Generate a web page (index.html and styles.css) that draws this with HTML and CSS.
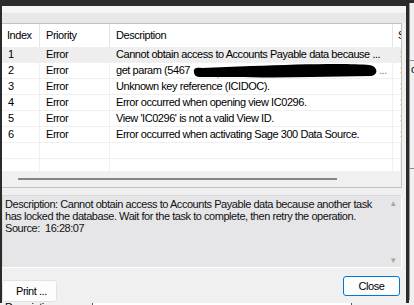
FILE: index.html
```html
<!DOCTYPE html>
<html lang="en">
<head>
  <meta charset="UTF-8">
  <title>Errors</title>
  <link rel="stylesheet" href="styles.css">
</head>
<body>
  <div class="desktop">
    <!-- Window behind the dialog -->
    <div class="bg-window">
      <div class="bg-upper">
        <div class="bg-side">
          <div class="bg-line"></div>
          <div class="bg-char">o</div>
          <div class="bg-gap"></div>
          <div class="bg-line"></div>
        </div>
      </div>
      <div class="bg-lower">
        <div class="bg-head">Description</div>
        <div class="bg-head wide"></div>
        <div class="bg-head"></div>
      </div>
    </div>

    <!-- Error dialog -->
    <div class="dialog">
      <div class="caption-strip"></div>
      <div class="tool-strip"></div>

      <div class="list">
        <div class="row head">
          <div class="cell">Index</div>
          <div class="cell">Priority</div>
          <div class="cell">Description</div>
          <div class="cell clip">Source</div>
        </div>
        <div class="rows">
          <div class="row selected">
            <div class="cell">1</div>
            <div class="cell">Error</div>
            <div class="cell">Cannot obtain access to Accounts Payable data because ...</div>
            <div class="cell clip">Sage</div>
          </div>
          <div class="row">
            <div class="cell">2</div>
            <div class="cell">Error</div>
            <div class="cell">get param (5467<span class="redacted"><svg width="188" height="15" viewBox="0 0 188 15"><path d="M3 9 C2 5 6 4 11 5 L60 3 C110 1 160 0 178 2 C187 3 188 12 180 13 L120 14 C80 15 40 14 10 14 C5 14 3 12 3 9 Z" fill="#000"/></svg></span><span class="dots">...</span></div>
            <div class="cell clip">Sage</div>
          </div>
          <div class="row">
            <div class="cell">3</div>
            <div class="cell">Error</div>
            <div class="cell">Unknown key reference (ICIDOC).</div>
            <div class="cell clip">Sage</div>
          </div>
          <div class="row">
            <div class="cell">4</div>
            <div class="cell">Error</div>
            <div class="cell">Error occurred when opening view IC0296.</div>
            <div class="cell clip">Sage</div>
          </div>
          <div class="row">
            <div class="cell">5</div>
            <div class="cell">Error</div>
            <div class="cell">View 'IC0296' is not a valid View ID.</div>
            <div class="cell clip">Sage</div>
          </div>
          <div class="row">
            <div class="cell">6</div>
            <div class="cell">Error</div>
            <div class="cell">Error occurred when activating Sage 300 Data Source.</div>
            <div class="cell clip">Sage</div>
          </div>
          <div class="row">
            <div class="cell"></div><div class="cell"></div><div class="cell"></div><div class="cell"></div>
          </div>
          <div class="row">
            <div class="cell"></div><div class="cell"></div><div class="cell"></div><div class="cell"></div>
          </div>
        </div>
        <div class="hscroll"><div class="hthumb"></div></div>
      </div>

      <!-- Details box -->
      <div class="details">
        <div class="details-text">Description: Cannot obtain access to Accounts Payable data because another task<br>has locked the database. Wait for the task to complete, then retry the operation.<br>Source:&nbsp; 16:28:07</div>
        <div class="vscroll"><span>&#9650;</span><span>&#9660;</span></div>
      </div>

      <div class="buttons">
        <button class="btn print">Print ...</button>
        <button class="btn close">Close</button>
      </div>
    </div>
  </div>
</body>
</html>
```

FILE: styles.css
```css
/* Base */
* {
  margin: 0;
  padding: 0;
  box-sizing: border-box;
}

html, body {
  width: 414px;
  height: 305px;
  overflow: hidden;
}

body {
  background-color: #2b2b2b;
  font-family: "Liberation Sans", Arial, sans-serif;
  font-size: 11px;
  letter-spacing: -0.45px;
  color: #000;
}

.desktop {
  position: relative;
  width: 414px;
  height: 305px;
}

/* Window behind */
.bg-window {
  margin-top: 3px;
  height: 302px;
  display: flex;
  flex-direction: column;
  background-color: #f0f0f0;
}

.bg-upper {
  flex: 1;
  display: flex;
  justify-content: flex-end;
}

.bg-side {
  width: 5px;
  display: flex;
  flex-direction: column;
  padding-top: 57px;
  border-left: 1px solid #9a9a9a;
  overflow: hidden;
}

.bg-line {
  height: 1px;
  background-color: #8c8c8c;
}

.bg-char {
  padding: 2px 0 0 1px;
  line-height: 12px;
}

.bg-gap {
  height: 93px;
}

.bg-lower {
  height: 5px;
  display: flex;
  background-color: #fff;
  overflow: hidden;
}

.bg-head {
  width: 93px;
  padding: 1px 0 0 5px;
  line-height: 12px;
  border-right: 1px solid #555;
  background-color: #f0f0f0;
  overflow: hidden;
}

.bg-head.wide {
  width: 259px;
  background-color: #fff;
}

.bg-head:last-child {
  flex: 1;
  border-right: none;
}

/* Dialog */
.dialog {
  position: absolute;
  left: 0;
  top: 0;
  width: 409px;
  height: 300px;
  display: flex;
  flex-direction: column;
  background-color: #f0f0f0;
  border-top: 3px solid #2b2b2b;
  border-left: 2px solid #2b2b2b;
  border-right: 3px solid #2b2b2b;
}

.caption-strip {
  height: 7px;
  background-color: #f5f5f5;
}

.tool-strip {
  height: 10px;
  background-color: #e8e8e8;
}

/* Error list */
.list {
  width: 400px;
  height: 165px;
  display: flex;
  flex-direction: column;
  background-color: #fff;
  border: 1px solid #c2c2c2;
  border-left: none;
}

.row {
  display: grid;
  grid-template-columns: 38px 70px 283px 8px;
  height: 16px;
}

.row.head {
  height: 23px;
}

.row.selected {
  background-color: #eeeeee;
}

.cell {
  padding-left: 6px;
  line-height: 15px;
  white-space: nowrap;
  overflow: hidden;
  border-right: 1px solid #f0f0f0;
  border-bottom: 1px solid #f0f0f0;
}

.head .cell {
  line-height: 23px;
  border-bottom: none;
  border-right-color: #e5e5e5;
}

.head .cell:first-child {
  padding-left: 5px;
}

.cell.clip {
  padding-left: 7px;
  border-right: none;
  color: #c07030;
}

.head .cell.clip {
  padding-left: 5px;
  color: #000;
}

.redacted {
  display: inline-block;
  vertical-align: top;
  margin-left: 1px;
  height: 15px;
}

.dots {
  color: #777;
}

.rows {
  height: 124px;
  overflow: hidden;
}

.hscroll {
  height: 16px;
  padding: 7px 0 0 16px;
  background-color: #f0f0f0;
}

.hthumb {
  width: 319px;
  height: 2px;
  background-color: #858585;
}

/* Details box */
.details {
  margin-top: 7px;
  width: 400px;
  height: 73px;
  display: flex;
  background-color: #e6e6e9;
  border: 1px solid;
  border-color: #dadada #fff #fff #dadada;
}

.details-text {
  flex: 1;
  padding: 2px 0 0 2px;
  line-height: 12px;
  white-space: nowrap;
  color: #111;
}

.vscroll {
  width: 16px;
  display: flex;
  flex-direction: column;
  justify-content: space-between;
  align-items: center;
  padding: 3px 0 2px;
  font-size: 8px;
  color: #a6a6a6;
}

/* Buttons */
.buttons {
  flex: 1;
  display: flex;
  justify-content: space-between;
  align-items: flex-start;
  padding-right: 6px;
}

.btn {
  font: inherit;
  letter-spacing: inherit;
  color: #000;
  background-color: #fdfdfd;
  border: 1px solid #e2e2e2;
  border-radius: 3px;
}

.btn.print {
  width: 55px;
  height: 22px;
  margin-top: 12px;
  padding-left: 13px;
  text-align: left;
}

.btn.close {
  width: 57px;
  height: 20px;
  margin-top: 8px;
  border-color: #0078d7;
}
```
